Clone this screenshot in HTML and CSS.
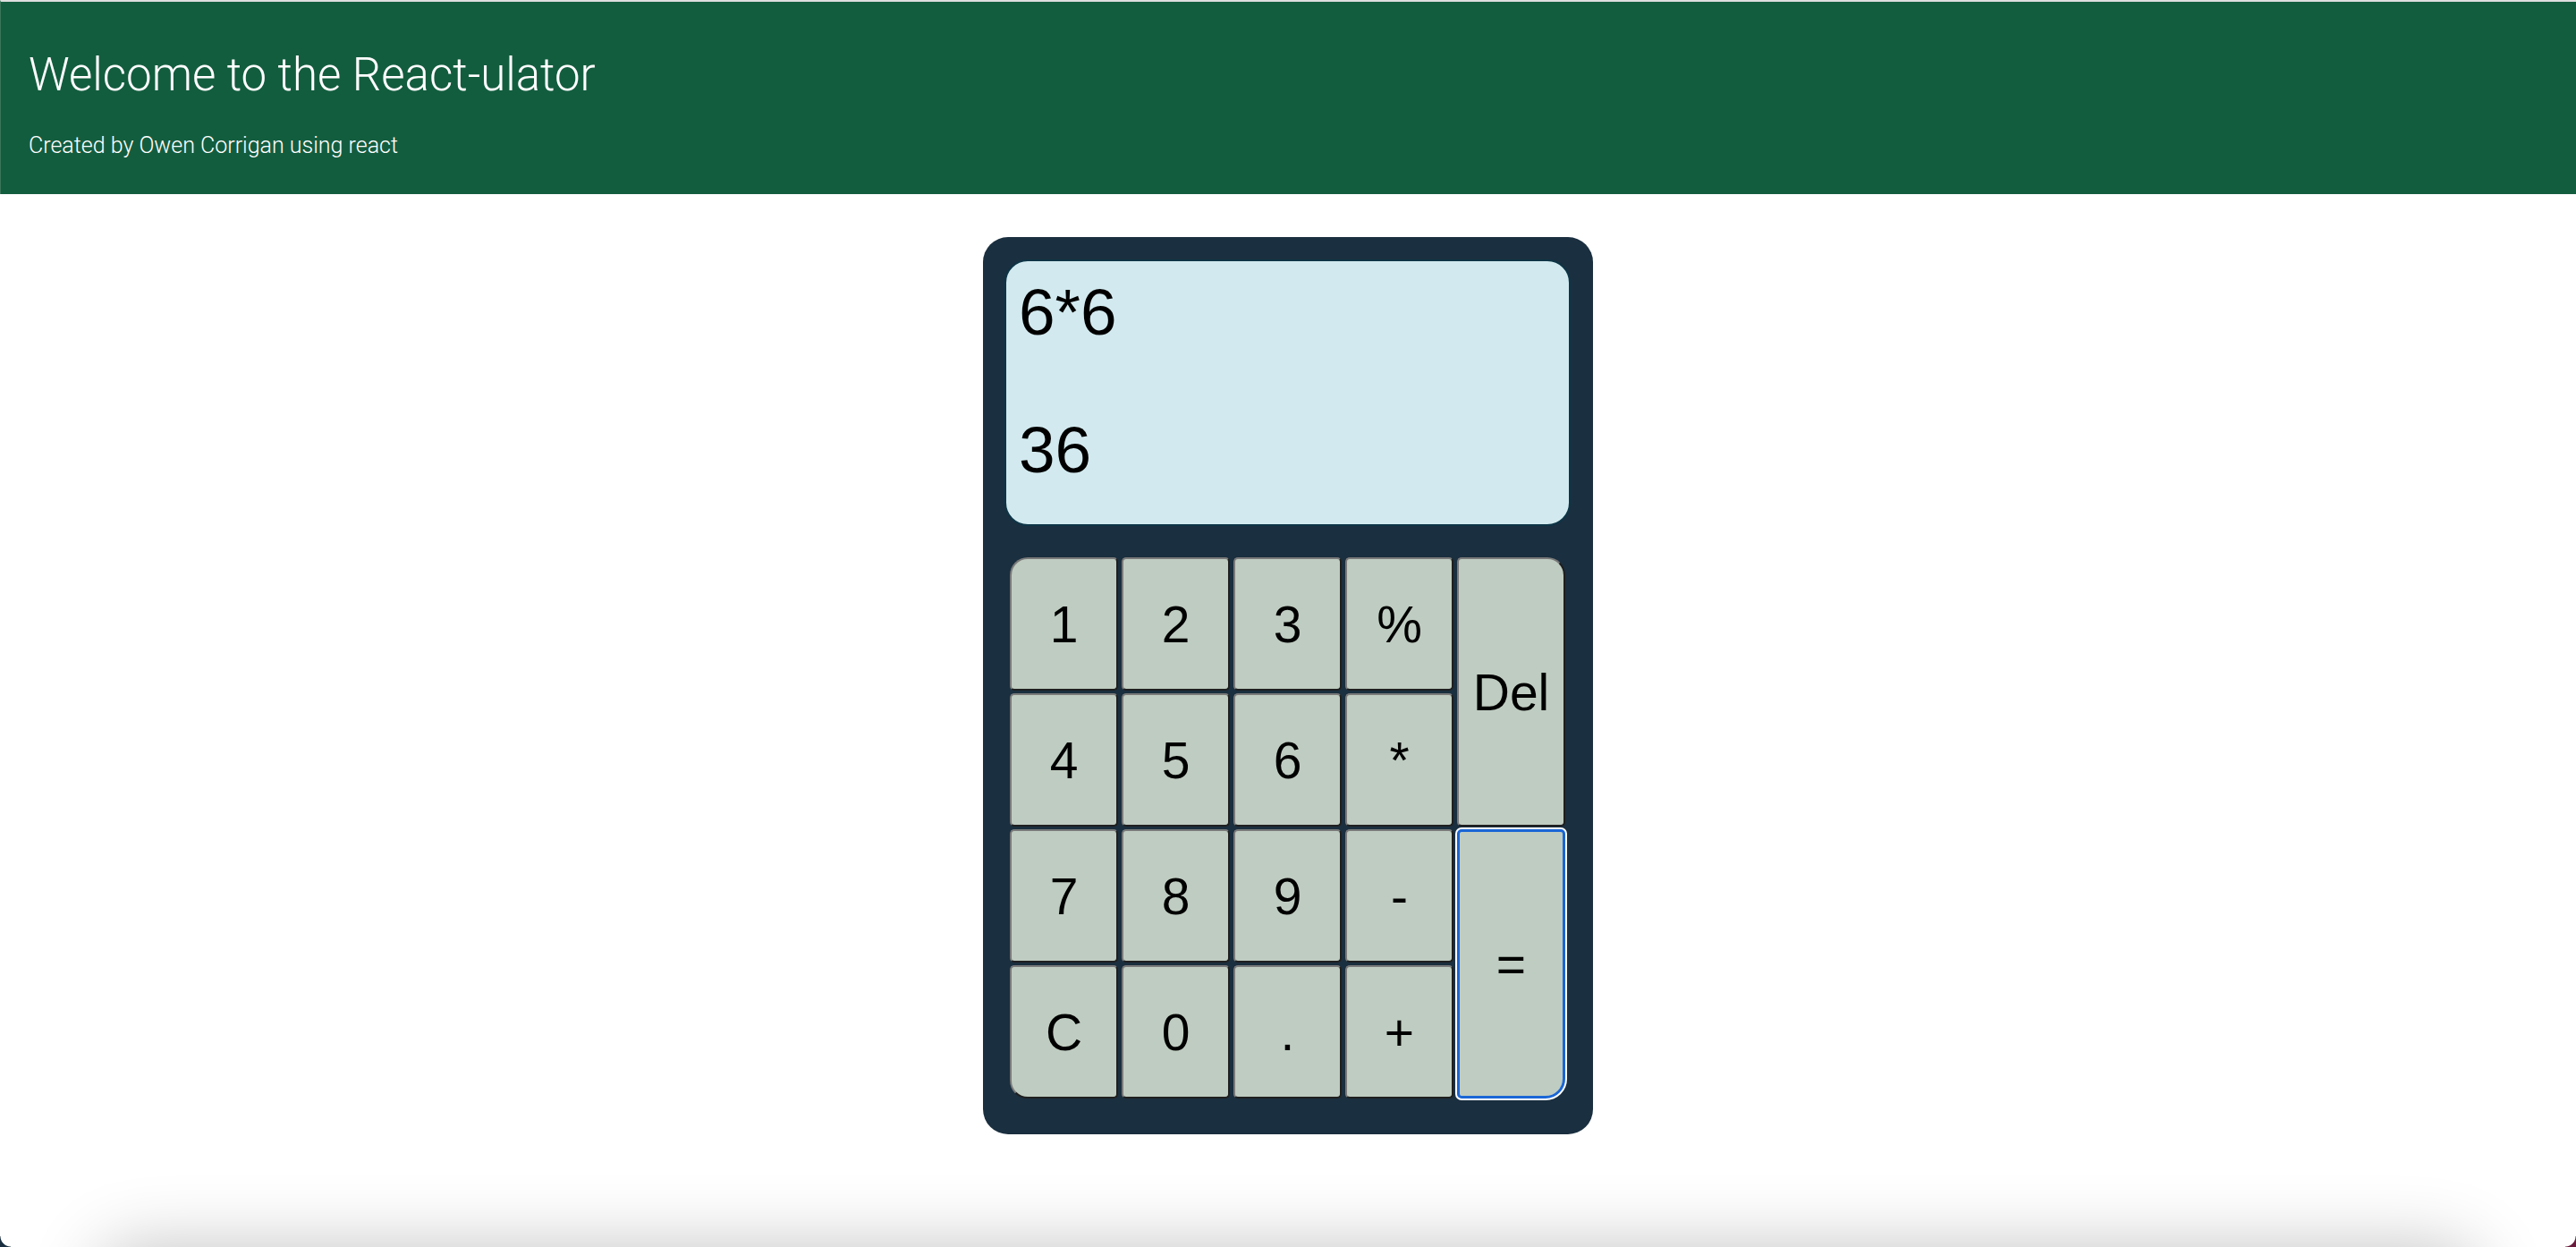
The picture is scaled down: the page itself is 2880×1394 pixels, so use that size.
FILE: index.html
```html
<!DOCTYPE html>
<html lang="en">
<head>
<meta charset="utf-8">
<title>React-ulator</title>
<link rel="stylesheet" href="styles.css">
</head>
<body>
<header class="site-header">
  <h1 class="site-title">Welcome to the React-ulator</h1>
  <p class="site-subtitle">Created by Owen Corrigan using react</p>
</header>
<main class="main">
  <div class="calculator">
    <div class="display">
      <div class="display-line">6*6</div>
      <div class="display-line">36</div>
    </div>
    <div class="keypad">
      <button class="key key-tl">1</button>
      <button class="key">2</button>
      <button class="key">3</button>
      <button class="key">%</button>
      <button class="key key-del">Del</button>
      <button class="key">4</button>
      <button class="key">5</button>
      <button class="key">6</button>
      <button class="key">*</button>
      <button class="key">7</button>
      <button class="key">8</button>
      <button class="key">9</button>
      <button class="key">-</button>
      <button class="key key-eq">=</button>
      <button class="key key-bl">C</button>
      <button class="key">0</button>
      <button class="key">.</button>
      <button class="key">+</button>
    </div>
  </div>
</main>
<div class="below-fold"></div>
<div class="corner corner-bl"></div>
<div class="corner corner-br"></div>
</body>
</html>
```
FILE: styles.css
```css
html, body {
  margin: 0;
  padding: 0;
  background: #ffffff;
}
body {
  font-family: "Liberation Sans", Arial, sans-serif;
  overflow: hidden;
}
.site-header {
  background: #135d3f;
  border-top: 2px solid #dedede;
  border-left: 1px solid #3a7659;
  padding: 0 32px 40px 31px;
  color: #ffffff;
  font-family: Roboto, "Open Sans", sans-serif;
  font-weight: 300;
}
.site-title {
  margin: 0;
  padding-top: 52px;
  font-size: 51px;
  font-weight: 300;
  line-height: 60px;
}
.site-subtitle {
  margin: 34px 0 0;
  font-size: 25px;
  font-weight: 300;
  line-height: 29px;
}
.main {
  display: flex;
  justify-content: center;
  padding-top: 48px;
}
.calculator {
  width: 682px;
  box-sizing: border-box;
  background: #1a2f3f;
  border-radius: 28px;
  padding: 25px 25px 40px 24px;
  display: flex;
  flex-direction: column;
}
.display {
  height: 298px;
  box-sizing: border-box;
  background: #d2eaef;
  border: 2px solid #0e3546;
  border-radius: 26px;
  padding: 15px 14px;
  display: flex;
  flex-direction: column;
  gap: 71px;
}
.display-line {
  font-size: 73px;
  line-height: 83px;
  color: #000;
}
.keypad {
  margin: 35px 7px 0 6px;
  display: grid;
  grid-template-columns: repeat(5, 121px);
  grid-template-rows: repeat(4, 149px);
  column-gap: 4px;
  row-gap: 3px;
}
.key {
  margin: 0;
  padding: 0;
  font-family: "Liberation Sans", Arial, sans-serif;
  font-size: 57px;
  color: #000;
  background: #bfccc1;
  border: 2px solid;
  border-color: #7a7a7a #1f1f1f #1f1f1f #7a7a7a;
  border-radius: 5px;
  cursor: pointer;
}
.key-tl { border-top-left-radius: 20px; }
.key-bl { border-bottom-left-radius: 20px; }
.key-del {
  grid-column: 5;
  grid-row: 1 / span 2;
  border-top-right-radius: 20px;
}
.key-eq {
  grid-column: 5;
  grid-row: 3 / span 2;
  border: 3px solid #1a66d6;
  border-bottom-right-radius: 22px;
  box-shadow: 0 0 0 2px #ffffff;
}
.below-fold {
  margin: 126px 110px 0;
  height: 300px;
  border-radius: 40px;
  background: #ffffff;
  box-shadow: 0 0 80px rgba(0, 0, 0, 0.24);
}
.corner {
  position: fixed;
  bottom: 0;
  width: 12px;
  height: 12px;
}
.corner-bl {
  left: 0;
  background: radial-gradient(circle at 100% 0, transparent 11px, #1a2f3f 12px);
}
.corner-br {
  right: 0;
  background: radial-gradient(circle at 0 0, transparent 11px, #6a1c3c 12px);
}
```
